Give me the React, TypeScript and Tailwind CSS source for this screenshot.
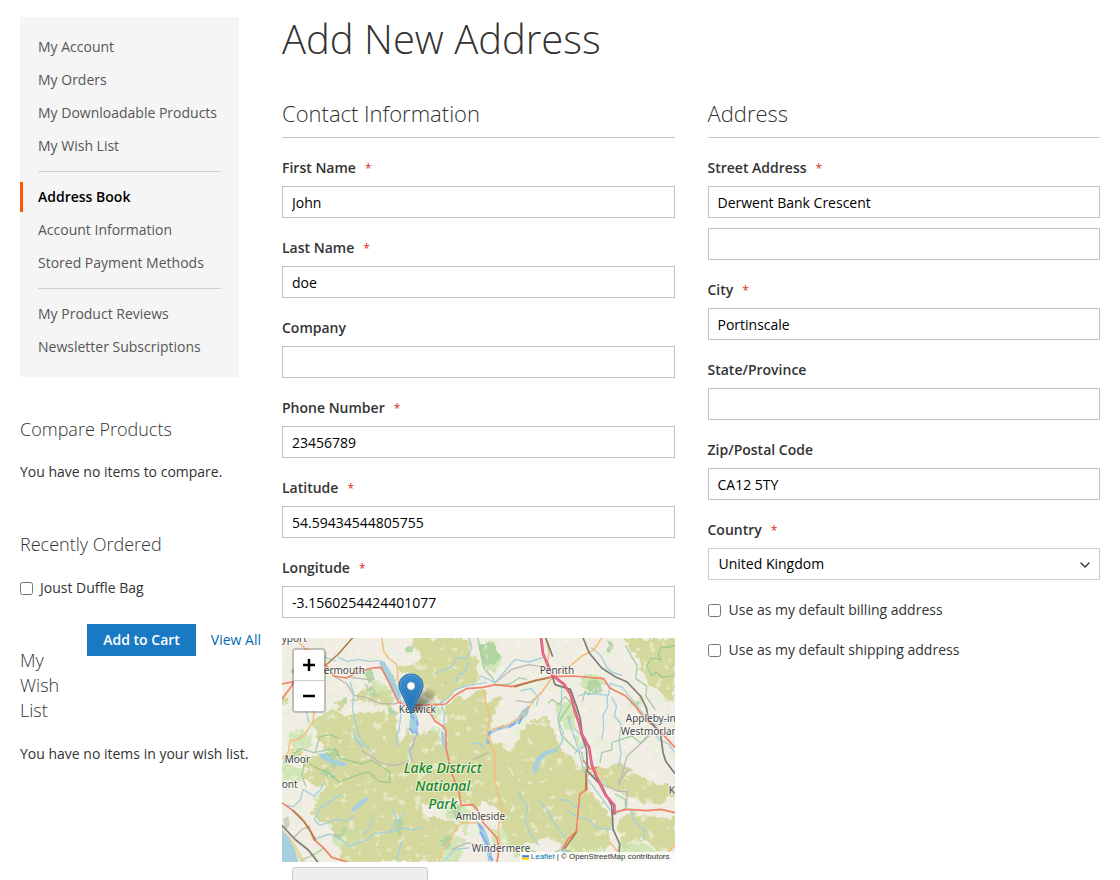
import { ReactNode } from "react";
import { ChevronDown } from "lucide-react";
import clsx from "clsx";

const navGroups = [
  ["My Account", "My Orders", "My Downloadable Products", "My Wish List"],
  ["Address Book", "Account Information", "Stored Payment Methods"],
  ["My Product Reviews", "Newsletter Subscriptions"],
];

const inputClass =
  "block h-8 w-full rounded-none border border-[#c2c2c2] bg-white px-[9px] text-sm text-black outline-none focus:border-[#006bb4]";

function AccountNav() {
  return (
    <nav className="mr-[22px] bg-[#f5f5f5] py-[15px]">
      {navGroups.map((group, i) => (
        <div key={group[0]}>
          {i > 0 && <hr className="mx-[18px] my-[10px] border-[#d1d1d1]" />}
          <ul className="flex flex-col gap-[3px]">
            {group.map((item) => (
              <li key={item}>
                <a
                  href="#"
                  className={clsx(
                    "block border-l-[3px] py-[5px] pl-[15px] leading-5",
                    item === "Address Book"
                      ? "border-[#ff5501] font-semibold text-black"
                      : "border-transparent text-[#575757]"
                  )}
                >
                  {item}
                </a>
              </li>
            ))}
          </ul>
        </div>
      ))}
    </nav>
  );
}

function Sidebar() {
  return (
    <aside>
      <AccountNav />

      <h2 className="mt-10 text-lg leading-[25px] font-light">Compare Products</h2>
      <p className="mt-5 leading-5">You have no items to compare.</p>

      <h2 className="mt-[50px] text-lg leading-[25px] font-light">Recently Ordered</h2>
      <label className="mt-[21px] flex items-center gap-[7px] leading-5">
        <input type="checkbox" className="size-[13px]" />
        Joust Duffle Bag
      </label>

      <div className="mt-[26px] flex items-start justify-between">
        <h2 className="mt-6 w-10 text-lg leading-[25px] font-light">My Wish List</h2>
        <div className="flex items-center gap-[15px]">
          <button type="button" className="h-8 bg-[#1979c3] px-4 font-semibold text-white">
            Add to Cart
          </button>
          <a href="#" className="whitespace-nowrap text-[#006bb4]">
            View All
          </a>
        </div>
      </div>
      <p className="mt-[21px] leading-5">You have no items in your wish list.</p>
    </aside>
  );
}

function Field({
  id,
  label,
  required,
  children,
}: {
  id: string;
  label: string;
  required?: boolean;
  children: ReactNode;
}) {
  return (
    <div className="mt-5">
      <label htmlFor={id} className="mb-2 block leading-5 font-semibold">
        {label}
        {required && <span className="ml-[9px] text-xs font-normal text-[#e02b27]">*</span>}
      </label>
      {children}
    </div>
  );
}

function TextField({ id, label, value, required }: { id: string; label: string; value?: string; required?: boolean }) {
  return (
    <Field id={id} label={label} required={required}>
      <input id={id} type="text" defaultValue={value} className={inputClass} />
    </Field>
  );
}

function CheckField({ label }: { label: string }) {
  return (
    <label className="mt-5 flex items-center gap-2 leading-5">
      <input type="checkbox" className="size-[13px]" />
      {label}
    </label>
  );
}

function SectionTitle({ children }: { children: ReactNode }) {
  return <h2 className="border-b border-[#c6c6c6] pb-3 text-[22px] leading-6 font-light">{children}</h2>;
}

// terrain paths are drawn on a 1179x672 sheet and scaled down by three
const moorland = [
  "M395 78L418 62L412 42L385 30L400 6H562L566 60L592 76L574 108L600 118L588 138L548 146L520 168L482 192L440 186L424 160L408 140L380 118L362 120L346 104L352 84L378 92Z",
  "M100 285L95 258L125 228L160 222L188 230L215 240L240 236L262 230L300 224L338 236L350 262L344 300L362 316L374 272L398 302L430 292L446 282L470 300L476 334L490 310L488 250L500 215L530 186L580 172L608 166L618 200L632 188L662 182L640 225L628 268L622 300L645 320L690 340L720 290L745 262L770 242L800 252L812 282L830 312L836 340L868 354L880 386L915 392L910 430L926 462L960 500L990 542L985 602L975 640L900 658L862 672L842 622L790 602L768 622L740 612L700 640L664 600L665 540L640 510L600 500L575 515L545 500L505 490L420 508L435 538L500 552L528 572L500 600L475 640L465 678H180L168 650L196 622L160 600L150 572L100 560L90 528L112 482L128 452L96 442L60 432L80 404L60 390L75 356L160 346L115 325Z",
  "M1028 6H1179V206L1150 190L1130 165L1100 140L1085 110L1065 76L1068 52L1040 36Z",
  "M940 390L970 396L1000 384L1050 400L1040 420L1090 424L1130 440L1179 455V478L1130 502L1080 500L1040 480L1010 470L960 440L935 415Z",
  "M1008 556L1040 534L1100 540L1179 548V640L1140 648L1108 622L1080 602L1030 640L1015 600Z",
  "M225 165L265 150L310 160L336 195L322 216L272 206L238 192L212 204Z",
  "M162 198L190 190L200 210L175 222Z",
  "M20 352L40 334L62 338L54 362L30 366Z",
  "M0 186L18 190L14 206L0 212Z",
];

const meadow = [
  "M100 60L135 52L150 72L118 82Z",
  "M262 140L290 132L320 158L340 200L318 196L290 170Z",
  "M92 262L130 225L160 228L140 262L104 300Z",
  "M0 392L44 388L66 410L50 442L18 430L0 434Z",
  "M190 258L212 280L230 326L212 318L198 290Z",
  "M95 492L150 470L190 476L166 502L132 520L122 566L96 548Z",
  "M150 602L196 570L240 574L258 600L214 636L168 640Z",
  "M408 186L450 190L470 212L488 212L472 252L440 236L412 222Z",
  "M446 270L470 278L480 330L505 384L520 430L492 392L468 330Z",
  "M490 512L528 500L574 532L560 590L538 570L500 545Z",
  "M470 610L510 590L550 610L530 676H478Z",
  "M620 580L666 570L700 606L740 640L690 660L640 620Z",
  "M822 200L860 188L880 220L886 286L860 282L836 258Z",
  "M880 300L910 312L902 340L876 326Z",
  "M902 110L944 104L968 136L930 160L896 150Z",
  "M975 390L1000 402L1022 438L994 428Z",
  "M1060 186L1084 172L1096 196L1074 214Z",
  "M590 26L640 20L660 66L640 112L606 90Z",
  "M20 296L60 280L92 300L84 330L40 334L22 322Z",
  "M850 610L890 590L980 640L980 672L858 672Z",
  "M1010 620L1060 610L1120 640L1160 672H1016Z",
];

const woods = [
  "M588 30L612 22L642 28L658 60L640 84L612 80L596 52Z",
  "M906 140L942 128L964 146L948 168L914 164Z",
  "M248 106L275 100L282 128L258 140Z",
  "M304 86L326 106L340 140L352 168L334 170L316 130Z",
  "M240 148L285 158L298 176L262 172Z",
  "M322 212L346 218L344 238L318 230Z",
  "M148 588L190 574L176 602Z",
  "M344 540L364 560L350 606L338 600Z",
  "M506 518L534 508L548 542L522 552Z",
  "M844 240L868 236L862 264Z",
  "M416 216L446 212L438 232L416 232Z",
  "M34 100L52 110L40 126L26 116Z",
  "M178 200L206 186L200 216Z",
  "M474 614L506 598L516 626L486 636Z",
  "M116 350L160 348L196 366L148 372L118 366Z",
  "M930 400L952 424L968 456L944 438Z",
  "M0 368L24 360L36 372L12 386L0 384Z",
  "M980 20L992 18L996 40L976 44Z",
  "M372 40L392 32L402 46L384 56Z",
  "M118 412L158 402L156 428L124 424Z",
  "M130 370L176 388L152 396Z",
  "M1022 406L1032 398L1034 420Z",
  "M1048 206L1066 196L1064 218Z",
];

const lakes = [
  "M290 72L308 76L324 104L342 142L358 176L356 196L338 180L320 140L302 104Z",
  "M388 228L402 230L410 250L408 290L392 296L382 270Z",
  "M478 284L488 290L492 330L502 354L490 344L478 314Z",
  "M745 208L738 236L712 258L686 274L646 284L622 298L618 326L610 318L618 290L648 274L680 266L706 246L722 222Z",
  "M112 352L134 354L154 370L196 382L190 392L152 384L118 368Z",
  "M264 480L256 496L230 516L206 534L212 516L238 492Z",
  "M756 418L752 394L764 366L788 346L826 336L828 346L796 356L776 376L768 402Z",
  "M586 556L606 572L620 604L628 640L634 676H620L612 636L598 602Z",
  "M0 580L20 604L36 632L50 678H0Z",
  "M836 626L860 654L850 660L838 644Z",
  "M214 276L224 306L248 332L240 336L218 308Z",
];

const rivers = [
  "M170 64L196 76L230 70L262 76L290 74",
  "M206 140L216 176L212 214L222 266L230 296L246 322L278 358",
  "M356 190L358 230L352 282L342 310L350 330",
  "M358 196L398 204L450 220L492 192L522 160L560 148L612 140",
  "M562 6L570 36L556 66L526 66L506 94L460 112",
  "M560 80L550 106L530 118L522 138",
  "M484 280L488 232L476 196",
  "M396 300L398 320L380 344L390 376",
  "M45 70L86 78L104 58L130 64L160 74",
  "M82 260L70 214L82 184L78 150",
  "M128 438L116 462L96 480L64 460L56 492L34 512L12 508",
  "M176 476L150 494L114 518L98 552L114 568L160 552L198 554L218 540",
  "M106 606L144 594L178 610L202 630L250 614L280 592L330 586L362 576L396 582L420 572",
  "M272 546L264 572L246 596",
  "M332 520L344 542L338 570L320 592",
  "M366 528L354 550L334 566",
  "M360 616L352 644L344 672",
  "M598 120L640 140L700 70L740 78L780 66",
  "M718 164L748 158L770 184L764 208",
  "M840 156L838 216L828 252L844 288L840 320L826 340",
  "M890 180L910 172L942 174L980 178L986 142L1022 154L1050 190L1074 220L1102 256L1130 270",
  "M976 178L978 212L964 238L966 280L960 308",
  "M990 184L1004 210L998 240L1018 264L1012 318L1018 352L1010 390",
  "M930 36L956 58L974 92L990 108L1020 118",
  "M710 468L724 498L738 510L730 552L744 590L770 626",
  "M770 494L798 524L816 560L850 604",
  "M832 490L862 494L880 514L900 508",
  "M856 524L886 542L920 550L944 576L990 580",
  "M1046 518L1056 552L1090 584L1084 610",
  "M880 280L900 300L908 330L880 350",
  "M1120 290L1130 310L1160 324L1179 350",
  "M1179 246L1150 256L1130 244",
  "M566 322L590 322L608 334",
  "M860 250L890 340L910 420L948 470L990 528",
  "M490 672L520 640L560 636",
];

const boundaries = [
  "M36 352L60 338L96 350L160 338L176 368L240 384L270 372L324 408V440L290 436L262 408L230 416L172 438L140 410L100 394L70 374L40 372Z",
  "M100 350L114 302L144 296L174 308",
  "M70 374L60 420L72 450",
  "M588 6L606 96L632 126L642 148L684 144L712 126L735 130",
  "M1032 30L1050 62L1066 88L1062 128L1095 150L1092 180L1120 220",
  "M1179 30L1136 36L1130 58L1138 72L1110 66L1094 90L1110 118L1124 108L1140 124L1179 118",
  "M800 200L812 190L830 206L850 182L868 200L830 260L838 296L880 340L900 350L906 378",
  "M955 380L960 350L990 342L990 320L1050 300L1078 322L1110 292",
  "M946 168L920 176L910 166L902 196",
  "M60 672L104 652L126 636",
  "M990 540L1032 516L1030 490L1000 474",
  "M740 640L790 660L840 640L900 660",
];

const primaryRoads = [
  "M0 190L30 150L34 140M0 144L60 132L132 86L156 120L194 126L234 106L272 96L298 94L322 140L350 198L366 206L406 208L456 206L492 204L520 178L554 158L604 154L642 146L690 152L760 134L812 122L876 120L966 128L984 156L1032 180L1062 212L1090 250L1130 280L1179 334",
  "M366 206L440 222L460 256L486 272L492 284L494 342L512 418L532 470L538 508L574 506L586 520",
  "M0 500L34 524L60 548L82 576L96 610L124 634L150 664L196 678",
  "M990 530L1036 520L1094 524L1138 520L1179 530",
  "M906 374L926 400L944 394M914 420L916 460L894 474L888 540L884 586L858 610L842 640",
  "M586 520L606 562L646 606L652 640L646 676",
];

const secondaryRoads = [
  "M132 86L104 54L70 38L40 6",
  "M300 6L306 46L320 66L344 84L352 150",
  "M98 220L94 256L68 296L50 310L24 314L20 350L0 370",
  "M34 140L60 160L98 196V222",
  "M792 6L802 48L796 92L812 118",
  "M822 118L870 86L900 60L936 42L960 6",
  "M608 164L612 200L624 244L616 296L624 320L640 350V440L654 494L662 520L650 570L654 620",
  "M586 560L540 560L520 580L506 614L484 640L470 678",
  "M812 122L786 160L760 190L724 238L680 266L632 280",
  "M910 424L940 400L962 424",
  "M986 620L1014 654M1179 628L1150 660",
];

const minorRoads = [
  "M156 120L196 144L216 178L252 184L294 202L338 204L352 200",
  "M394 376L386 346L398 318L406 290",
  "M640 140L690 100L740 86L780 92L812 108",
  "M812 124L778 172L744 200L706 194",
  "M240 344L300 382L340 388L380 376",
  "M36 606L60 580L86 570",
  "M208 124L270 132",
  "M1040 400L1010 440M1012 448L1036 360L1078 322L1104 290",
  "M960 444L1010 466L1036 466L1034 510",
  "M576 370L620 350",
  "M510 640L560 620L600 632",
];

const trunkRoads = ["M212 6L170 54L136 84", "M700 152L760 134L800 126", "M34 524L66 556L90 592L102 612", "M914 400L912 462", "M884 588L850 636"];

const rails = [
  "M904 6L922 50L960 96L1000 122L1036 138L1076 180L1094 216L1100 250L1136 292L1144 350L1152 376L1179 412",
  "M792 6L812 60M812 122L820 146L866 160L884 210L896 250L902 302L914 340L918 406L960 450L990 510L994 580L1014 624L1010 672",
  "M0 568L42 612L80 642L108 678",
];

const motorway =
  "M778 6L784 54L812 118L846 144L866 174L878 220L892 262L900 294L922 334L930 386L946 426L972 478L998 508V532";

function MapLabel({ x, y, children }: { x: number; y: number; children: ReactNode }) {
  return (
    <text x={x} y={y} className="fill-[#444] stroke-white/70 text-[10px] [paint-order:stroke]" strokeWidth="2">
      {children}
    </text>
  );
}

function MapTiles() {
  return (
    <svg
      viewBox="0 0 393 224"
      preserveAspectRatio="xMidYMid slice"
      className="block size-full"
      fontFamily="'Noto Sans', sans-serif"
      fill="none"
      strokeLinejoin="round"
      strokeLinecap="round"
    >
      <defs>
        {/* mottled field cover */}
        <filter id="fields" x="0" y="0" width="100%" height="100%">
          <feTurbulence type="fractalNoise" baseFrequency=".09" numOctaves="3" seed="4" />
          <feColorMatrix values="0 0 0 0 .78  0 0 0 0 .88  0 0 0 0 .66  9 0 0 0 -5" />
        </filter>
        <filter id="scree" x="0" y="0" width="100%" height="100%">
          <feTurbulence type="fractalNoise" baseFrequency=".12" numOctaves="3" seed="9" />
          <feColorMatrix values="0 0 0 0 .94  0 0 0 0 .93  0 0 0 0 .82  0 9 0 0 -5.600" />
        </filter>
        {/* ragged edges for land cover */}
        <filter id="ragged" x="0" y="0" width="100%" height="100%">
          <feTurbulence type="fractalNoise" baseFrequency=".1" numOctaves="3" seed="2" />
          <feDisplacementMap in="SourceGraphic" scale="12" xChannelSelector="R" yChannelSelector="G" />
        </filter>
      </defs>

      <rect width="393" height="224" fill="#f1ede5" />
      <rect width="393" height="224" fill="#fff" filter="url(#fields)" opacity=".6" />
      <g filter="url(#ragged)">
        <g transform="scale(.333333) translate(0 -6)">
          <path d="M-20 -20H1200V700H-20Z" fill="none" />
          <path d={meadow.join("")} fill="#d3e7b8" opacity=".8" />
          <path d={moorland.join("")} fill="#d5d89d" />
          <path d={meadow.join("")} fill="#c9dfa8" opacity=".4" />
          <path d={woods.join("")} fill="#add19e" opacity=".85" />
        </g>
      </g>
      <rect width="393" height="224" fill="#fff" filter="url(#scree)" opacity=".5" />

      <g transform="scale(.333333) translate(0 -6)">
        <path d="M0 588L24 612L42 640L62 676" stroke="#e4dba6" strokeWidth="14" />
        <path d="M4 550L20 540L24 566L10 586Z" fill="#d0cdca" />
        <path d={boundaries.join("")} stroke="#8cc48c" strokeWidth="4" opacity=".75" />
        <path d={rivers.join("")} stroke="#a4cfdb" strokeWidth="4" />
        <path d={lakes.join("")} fill="#a6d0dd" />
        <path
          d="M388 240l8 8m8 8l4 10m-24 12l8 10m10-2l6 8M740 214l-8 14m-10 14l-10 20m-12 0l-16 10m-20-2l-16 8m-22 8l-8 12m2 14v10M590 564l10 14m-4 12l10 14m2 6l10 16m-2 14l10 12m-2 10l8 8"
          stroke="#83a9f0"
          strokeWidth="6"
        />
        <path d={minorRoads.join("")} stroke="#bcb9b8" strokeWidth="4" />
        <path d={secondaryRoads.join("")} stroke="#f6bd7e" strokeWidth="4.500" />
        <path d={primaryRoads.join("")} stroke="#f0836a" strokeWidth="5" />
        <path d={trunkRoads.join("")} stroke="#b0804c" strokeWidth="5" />
        <path d={rails.join("")} stroke="#7c7c78" strokeWidth="5" />
        <path d={motorway} stroke="#dc4f74" strokeWidth="8" />
        <path d={motorway} stroke="#ee7f99" strokeWidth="3" />
      </g>

      <MapLabel x={0} y={4}>yport</MapLabel>
      <MapLabel x={42} y={36}>ermouth</MapLabel>
      <MapLabel x={117} y={75}>Keswick</MapLabel>
      <MapLabel x={258} y={36}>Penrith</MapLabel>
      <MapLabel x={344} y={84}>Appleby-in</MapLabel>
      <MapLabel x={339} y={97}>Westmorlar</MapLabel>
      <MapLabel x={3} y={125}>Moor</MapLabel>
      <MapLabel x={0} y={150}>ont</MapLabel>
      <MapLabel x={174} y={182}>Ambleside</MapLabel>
      <MapLabel x={190} y={214}>Windermere</MapLabel>
      <MapLabel x={387} y={156}>K</MapLabel>
      <g
        textAnchor="middle"
        className="fill-[#14891f] stroke-white/60 text-sm font-medium italic [paint-order:stroke]"
        strokeWidth="2"
      >
        <text x="161" y="135">Lake District</text>
        <text x="161" y="153">National</text>
        <text x="161" y="171">Park</text>
      </g>
    </svg>
  );
}

function Marker() {
  return (
    <svg viewBox="0 0 42 43" className="absolute top-[35px] left-[116px] h-[43px] w-[42px]">
      <defs>
        <linearGradient id="pin" x1="0" y1="0" x2="0" y2="1">
          <stop offset="0" stopColor="#3a8fd0" />
          <stop offset="1" stopColor="#2370ad" />
        </linearGradient>
        <linearGradient id="shade" x1="0" y1="1" x2="1" y2="0">
          <stop offset="0" stopOpacity=".6" />
          <stop offset="1" stopOpacity=".1" />
        </linearGradient>
        <filter id="soft" x="-30%" y="-30%" width="160%" height="160%">
          <feGaussianBlur stdDeviation="1.500" />
        </filter>
      </defs>
      <path d="M13 40L20 22Q28 14 36 18Q40 25 30 31Z" fill="url(#shade)" filter="url(#soft)" />
      <path
        d="M13 1C6 1 1 6 1 12.800C1 16 2.400 18.600 4 21.500L13 41L22 21.500C23.600 18.600 25 16 25 12.800C25 6 20 1 13 1Z"
        fill="url(#pin)"
        stroke="#2e6c9d"
      />
      <path
        d="M13 2.200C6.800 2.200 2.200 6.700 2.200 12.800C2.200 15.600 3.600 18.200 5.100 21L13 38.200L20.900 21C22.400 18.200 23.800 15.600 23.800 12.800C23.800 6.700 19.200 2.200 13 2.200Z"
        fill="none"
        stroke="#fff"
        opacity=".15"
      />
      <circle cx="13" cy="13" r="4.200" fill="#fff" stroke="#2e6c9d" strokeWidth=".6" />
    </svg>
  );
}

function LocationMap() {
  return (
    <div className="relative mt-5 h-56 overflow-hidden bg-[#ddd]">
      <MapTiles />
      <Marker />
      <div className="absolute top-[10px] left-[10px] flex flex-col rounded border-2 border-black/20 bg-clip-padding">
        <button
          type="button"
          aria-label="Zoom in"
          className="flex h-[31px] w-[30px] items-center justify-center rounded-t-xs border-b border-[#ccc] bg-white"
        >
          <svg viewBox="0 0 12 12" className="size-3" stroke="#000" strokeWidth="2.500">
            <path d="M0 6H12M6 0V12" />
          </svg>
        </button>
        <button
          type="button"
          aria-label="Zoom out"
          className="flex h-[30px] w-[30px] items-center justify-center rounded-b-xs bg-white"
        >
          <svg viewBox="0 0 12 12" className="size-3" stroke="#000" strokeWidth="2.500">
            <path d="M0 6H12" />
          </svg>
        </button>
      </div>
      <div className="absolute right-0 bottom-0 flex items-center gap-[2px] bg-white/80 pr-[5px] pl-[2px] font-['Liberation_Sans',sans-serif] text-[8px] leading-[10px] text-[#333]">
        <svg viewBox="0 0 12 8" className="h-[5px] w-[7px]">
          <path fill="#4c7be1" d="M0 0h12v4H0z" />
          <path fill="#ffd500" d="M0 4h12v4H0z" />
        </svg>
        <a href="#" className="text-[#0078a8]">
          Leaflet
        </a>
        <span>|</span>
        <span>© OpenStreetMap contributors</span>
      </div>
    </div>
  );
}

export default function App() {
  return (
    <div className="grid grid-cols-[241px_1fr] gap-[21px] bg-white px-5 pt-[17px] pb-10 font-['Open_Sans',sans-serif] text-sm text-[#333]">
      <Sidebar />

      <main>
        <h1 className="text-[40px] leading-[44px] font-light">Add New Address</h1>

        <form className="mt-10 grid grid-cols-2 gap-[33px]">
          <section>
            <SectionTitle>Contact Information</SectionTitle>
            <TextField id="firstname" label="First Name" value="John" required />
            <TextField id="lastname" label="Last Name" value="doe" required />
            <TextField id="company" label="Company" />
            <TextField id="telephone" label="Phone Number" value="23456789" required />
            <TextField id="latitude" label="Latitude" value="54.59434544805755" required />
            <TextField id="longitude" label="Longitude" value="-3.1560254424401077" required />
            <LocationMap />
            <button
              type="button"
              aria-label="Use current location"
              className="mt-[5px] ml-[10px] block h-8 w-[136px] rounded-[3px] border border-[#ccc] bg-[#eee]"
            />
          </section>

          <section>
            <SectionTitle>Address</SectionTitle>
            <Field id="street_1" label="Street Address" required>
              <input id="street_1" type="text" defaultValue="Derwent Bank Crescent" className={inputClass} />
              <input type="text" aria-label="Street Address: Line 2" className={clsx(inputClass, "mt-[10px]")} />
            </Field>
            <TextField id="city" label="City" value="Portinscale" required />
            <TextField id="region" label="State/Province" />
            <TextField id="zip" label="Zip/Postal Code" value="CA12 5TY" />
            <Field id="country" label="Country" required>
              <div className="relative">
                <select
                  id="country"
                  defaultValue="GB"
                  className="block h-8 w-full appearance-none border border-[#ccc] bg-white px-[10px] text-sm text-black"
                >
                  <option value="GB">United Kingdom</option>
                </select>
                <ChevronDown className="pointer-events-none absolute top-[9px] right-[7px] size-4 text-[#333]" />
              </div>
            </Field>
            <CheckField label="Use as my default billing address" />
            <CheckField label="Use as my default shipping address" />
          </section>
        </form>
      </main>
    </div>
  );
}
